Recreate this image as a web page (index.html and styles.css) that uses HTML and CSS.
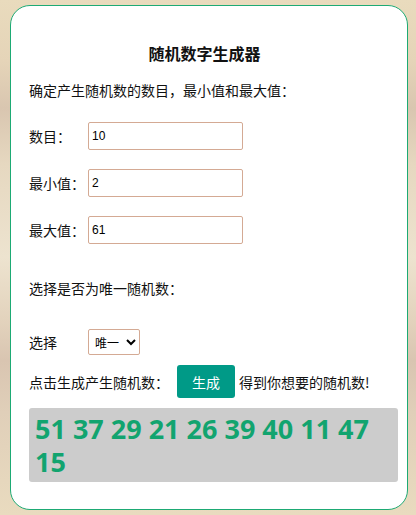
FILE: index.html
```html
<!DOCTYPE html>
<html lang="zh">
<head>
<meta charset="utf-8">
<title>随机数字生成器</title>
<link rel="stylesheet" href="styles.css">
</head>
<body>
<div class="card">
  <h2 class="title">随机数字生成器</h2>
  <p class="intro">确定产生随机数的数目，最小值和最大值：</p>
  <div class="row">
    <label class="label">数目：</label>
    <input class="field" type="text" value="10">
  </div>
  <div class="row">
    <label class="label">最小值：</label>
    <input class="field" type="text" value="2">
  </div>
  <div class="row">
    <label class="label">最大值：</label>
    <input class="field" type="text" value="61">
  </div>
  <p class="question">选择是否为唯一随机数：</p>
  <div class="row select-row">
    <label class="label">选择</label>
    <select class="choice">
      <option>唯一</option>
      <option>不唯一</option>
    </select>
  </div>
  <div class="action">
    <span>点击生成产生随机数：</span>
    <button class="btn" type="button">生成</button>
    <span>得到你想要的随机数!</span>
  </div>
  <div class="result">51 37 29 21 26 39 40 11 47 15</div>
</div>
</body>
</html>
```

FILE: styles.css
```css
html, body {
  margin: 0;
  padding: 0;
}
body {
  width: 416px;
  height: 515px;
  overflow: hidden;
  font-family: "Noto Sans CJK SC", "Noto Sans", sans-serif;
  font-size: 14px;
  line-height: 20px;
  color: #111;
  background: linear-gradient(180deg, #e9dbbd 0%, #e5d4b8 12%, #d9c6b0 21%, #e6d8c0 32%, #ede3cf 50%, #e3d3bd 62%, #d9c5b1 70%, #e0cfb9 80%, #e9dbbf 100%);
  padding: 5px 8px 5px 10px;
  box-sizing: border-box;
}
.card {
  width: 398px;
  height: 505px;
  box-sizing: border-box;
  background: #fff;
  border: 1.5px solid #1daa74;
  border-radius: 20px;
  padding: 36px 9px 0 18px;
}
.title {
  margin: 0 9px 0 -9px;
  font-size: 16px;
  line-height: 22px;
  font-weight: 700;
  text-align: center;
}
.intro {
  margin: 16px 0 0;
}
.row {
  display: flex;
  align-items: center;
  margin-top: 19px;
}
.intro + .row {
  margin-top: 22px;
}
.label {
  width: 59px;
  flex: none;
}
.field {
  width: 155px;
  height: 28px;
  box-sizing: border-box;
  border: 1px solid #d4aa94;
  border-radius: 2px;
  padding: 0 3px;
  font-family: "Liberation Sans", Arial, sans-serif;
  font-size: 12px;
  color: #000;
  outline: none;
}
.question {
  margin: 34px 0 0;
}
.select-row {
  margin-top: 31px;
}
.choice {
  width: 52px;
  height: 26px;
  box-sizing: border-box;
  border: 1px solid #d4aa94;
  border-radius: 2px;
  background: #fff;
  font-family: "Noto Sans CJK SC", sans-serif;
  font-size: 12px;
  color: #000;
  padding: 0 2px;
}
.action {
  display: flex;
  align-items: center;
  margin-top: 10px;
}
.btn {
  width: 58px;
  height: 33px;
  margin: 0 4px 0 8px;
  border: none;
  border-radius: 3px;
  background: #009a87;
  color: #fff;
  font-family: "Noto Sans CJK SC", sans-serif;
  font-size: 14px;
  padding: 0;
}
.result {
  margin-top: 10px;
  width: 369px;
  box-sizing: border-box;
  background: #cccccc;
  border-radius: 3px;
  padding: 4px 6px;
  font-family: "Open Sans", sans-serif;
  font-weight: 700;
  font-size: 27px;
  line-height: 33px;
  color: #12a46f;
}
```
